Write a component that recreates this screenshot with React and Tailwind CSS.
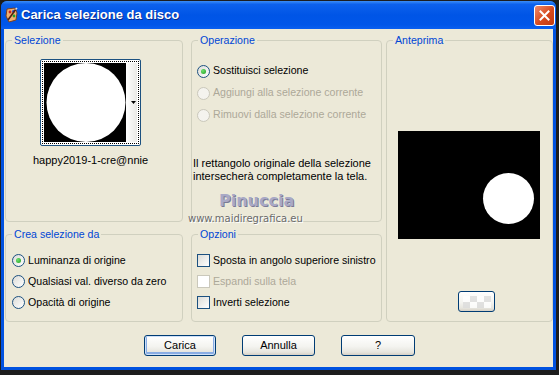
function Radio({ checked, disabled }) {
  return (
    <span
      className={
        "w-[13px] h-[13px] rounded-full border flex items-center justify-center shrink-0 " +
        (disabled
          ? "border-[#cac8bb] bg-[#f4f3ee]"
          : "border-[#1c5180] bg-[linear-gradient(135deg,#dcdcd7,#ffffff)]")
      }
    >
      {checked && <span className="w-[5px] h-[5px] rounded-full bg-[radial-gradient(circle_at_35%_35%,#6ee06e,#1f9f1f)]" />}
    </span>
  );
}

function Check({ disabled }) {
  return (
    <span
      className={
        "w-[13px] h-[13px] border shrink-0 " +
        (disabled
          ? "border-[#cac8bb] bg-white"
          : "border-[#1c5180] bg-[linear-gradient(135deg,#dcdcd7,#ffffff)]")
      }
    />
  );
}

function Group({ title, className, children }) {
  return (
    <div className={"relative border border-[#d0d0bf] rounded-[4px] " + className}>
      <span className="absolute -top-[7px] left-[6px] px-[2px] bg-[#ece9d8] text-[#0046d5] leading-[13px] whitespace-nowrap">
        {title}
      </span>
      {children}
    </div>
  );
}

function XpButton({ children, def, className }) {
  return (
    <button
      className={
        "h-[21px] border border-[#003c74] rounded-[3px] bg-[linear-gradient(to_bottom,#ffffff,#f4f4f0_55%,#e6e5de_85%,#d6d0c5)] text-black leading-none " +
        (def ? "shadow-[inset_0_0_0_1px_#cee0f8,inset_0_-1px_0_2px_#89ade4] " : "") +
        className
      }
    >
      {children}
    </button>
  );
}

function AppIcon() {
  return (
    <svg width="14" height="16" viewBox="0 0 14 16">
      <path d="M2 2 L10 1 L12 6 L11 13 L4 15 L1 9 Z" fill="#f0b070" stroke="#7a4020" strokeWidth="1" />
      <circle cx="5" cy="5" r="1.4" fill="#d02020" />
      <circle cx="8.5" cy="4.5" r="1.4" fill="#2050d0" />
      <circle cx="9" cy="9" r="1.4" fill="#20a030" />
      <path d="M3 13 L11 2" stroke="#502010" strokeWidth="1.6" />
      <path d="M10.5 2.5 L12 1" stroke="#e0e0e0" strokeWidth="1.6" />
    </svg>
  );
}

export default function App() {
  return (
    <div className="w-[559px] h-[375px] bg-[#1d1d1d] flex flex-col pt-px pl-px pr-[3px] pb-[5px] font-['Liberation_Sans',Arial,sans-serif] text-[10.6px] text-black">
      <div className="flex-1 flex flex-col bg-[#0052e0] rounded-t-[6px] overflow-hidden">
        {/* title bar */}
        <div className="h-[28px] shrink-0 flex items-center bg-[linear-gradient(to_bottom,#3c8ef6_0%,#0d61ec_12%,#0055e6_50%,#0056e9_85%,#0a5ff0_100%)]">
          <div className="ml-[4px] w-[14px] flex justify-center">
            <AppIcon />
          </div>
          <span className="ml-[2px] text-white font-bold text-[13px] [text-shadow:1px_1px_0_#0b2a8a]">
            Carica selezione da disco
          </span>
          <div className="ml-auto mr-[1px] w-[21px] h-[21px] rounded-[3px] border border-white bg-[linear-gradient(135deg,#ef8a6a,#d6491e_55%,#c03a14)] flex items-center justify-center">
            <svg width="11" height="11" viewBox="0 0 11 11">
              <path d="M1.5 1.5 L9.5 9.5 M9.5 1.5 L1.5 9.5" stroke="white" strokeWidth="2" strokeLinecap="square" />
            </svg>
          </div>
        </div>

        {/* client area */}
        <div className="flex-1 flex px-[3px] pb-[3px]">
          <div className="flex-1 bg-[#ece9d8] flex flex-col pt-[11px] pl-px">
            <div className="flex gap-[4px]">
              <div className="grid grid-cols-[178px_191px] grid-rows-[182px_88px] gap-x-[8px] gap-y-[12px]">
                <Group title="Selezione">
                  <div className="ml-[34px] mt-[18px] w-[101px] flex flex-col items-center">
                    <div className="w-[101px] h-[87px] border border-[#1c5180] rounded-[2px] p-px bg-white">
                      <div className="w-full h-full border border-dotted border-black p-px flex">
                        <div className="w-[82px] h-full bg-black flex items-center justify-center overflow-hidden">
                          <svg width="82" height="79" viewBox="0 0 82 79">
                            <circle cx="42" cy="39.5" r="39.5" fill="white" />
                          </svg>
                        </div>
                        <div className="flex-1 bg-[linear-gradient(to_right,#ffffff,#e9e9e6)] flex items-center justify-end pr-px">
                          <svg width="5" height="4" viewBox="0 0 5 4">
                            <path d="M0 0 H5 L2.5 3 Z" fill="black" />
                          </svg>
                        </div>
                      </div>
                    </div>
                    <span className="mt-[8px] whitespace-nowrap leading-[13px] text-[11px]">happy2019-1-cre@nnie</span>
                  </div>
                </Group>

                <Group title="Operazione">
                  <div className="flex flex-col pl-[5px] pt-[19px] whitespace-nowrap">
                    <div className="h-[22px] flex items-center gap-[3px]">
                      <Radio checked />
                      <span>Sostituisci selezione</span>
                    </div>
                    <div className="h-[22px] flex items-center gap-[3px] text-[#aca899]">
                      <Radio disabled />
                      <span>Aggiungi alla selezione corrente</span>
                    </div>
                    <div className="h-[22px] flex items-center gap-[3px] text-[#aca899]">
                      <Radio disabled />
                      <span>Rimuovi dalla selezione corrente</span>
                    </div>
                  </div>
                  <p className="mt-[31px] ml-px leading-[13px] text-[11px]">
                    Il rettangolo originale della selezione
                    <br />
                    intersecherà completamente la tela.
                  </p>
                  <span className="absolute left-[27px] top-[151px] font-['DejaVu_Sans',sans-serif] font-bold text-[16px] leading-[18px] text-[#a9a9c6] [text-shadow:1px_1px_0_#7a7a96]">
                    Pinuccia
                  </span>
                  <span className="absolute -left-[4px] top-[171px] font-['DejaVu_Sans',sans-serif] text-[10px] leading-[13px] text-[#6a6a6a] [text-shadow:1px_1px_0_#ffffff]">
                    www.maidiregrafica.eu
                  </span>
                </Group>

                <Group title="Crea selezione da">
                  <div className="flex flex-col pl-[6px] pt-[15px] whitespace-nowrap">
                    <div className="h-[21px] flex items-center gap-[3px]">
                      <Radio checked />
                      <span>Luminanza di origine</span>
                    </div>
                    <div className="h-[21px] flex items-center gap-[3px]">
                      <Radio />
                      <span>Qualsiasi val. diverso da zero</span>
                    </div>
                    <div className="h-[21px] flex items-center gap-[3px]">
                      <Radio />
                      <span>Opacità di origine</span>
                    </div>
                  </div>
                </Group>

                <Group title="Opzioni">
                  <div className="flex flex-col pl-[5px] pt-[15px] whitespace-nowrap">
                    <div className="h-[21px] flex items-center gap-[3px]">
                      <Check />
                      <span>Sposta in angolo superiore sinistro</span>
                    </div>
                    <div className="h-[21px] flex items-center gap-[3px] text-[#aca899]">
                      <Check disabled />
                      <span>Espandi sulla tela</span>
                    </div>
                    <div className="h-[21px] flex items-center gap-[3px]">
                      <Check />
                      <span>Inverti selezione</span>
                    </div>
                  </div>
                </Group>
              </div>

              <Group title="Anteprima" className="w-[167px] h-[282px]">
                <div className="ml-[11px] mt-[90px] w-[142px] h-[108px] bg-black">
                  <svg width="142" height="108" viewBox="0 0 142 108">
                    <circle cx="110.5" cy="67.5" r="25.5" fill="white" />
                  </svg>
                </div>
                <XpButton className="ml-[71px] mt-[52px] w-[37px] h-[19px] flex items-center justify-center">
                  <span className="w-[28px] h-[12px] bg-[conic-gradient(#dcdcdc_25%,#ffffff_0_50%,#dcdcdc_0_75%,#ffffff_0)] bg-[length:14px_12px] opacity-80" />
                </XpButton>
              </Group>
            </div>

            <div className="mt-[13px] pl-[139px] flex gap-[26px] text-[11px]">
              <XpButton def className="w-[72px]">Carica</XpButton>
              <XpButton className="w-[73px]">Annulla</XpButton>
              <XpButton className="w-[74px]">?</XpButton>
            </div>
          </div>
        </div>
      </div>
    </div>
  );
}
